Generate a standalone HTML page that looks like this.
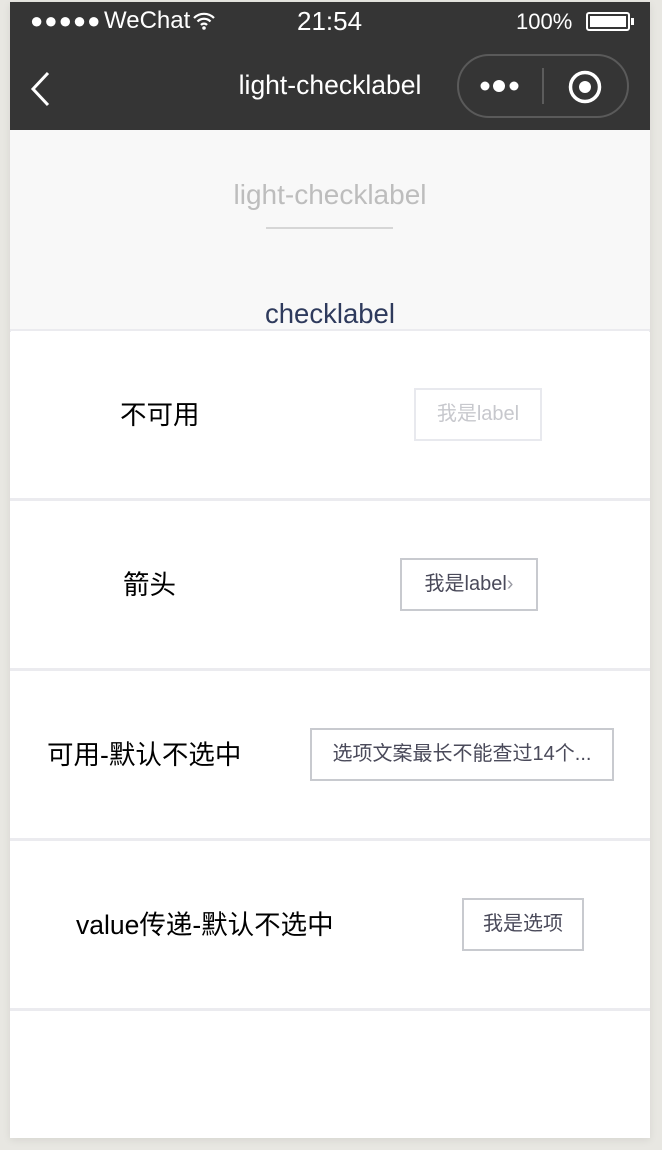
<!DOCTYPE html>
<html><head><meta charset="utf-8"><style>
*{margin:0;padding:0;box-sizing:border-box}
body{width:662px;height:1150px;background:#e8e7e2;font-family:"Liberation Sans","Noto Sans CJK SC",sans-serif;position:relative;overflow:hidden}
#f{position:absolute;left:10px;top:2px;width:640px;height:1136px;background:#fff;overflow:hidden;box-shadow:0 2px 8px rgba(0,0,0,.08)}
.hdr{position:absolute;left:0;top:0;width:640px;height:128px;background:#353535;color:#fff}
.abs{position:absolute}
.gray{position:absolute;left:0;top:128px;width:640px;height:201px;background:#f8f8f8}
.card{position:absolute;left:1px;width:638px;height:167px;background:#fff}
.sep{position:absolute;left:0;width:640px;height:3px;background:#ebebef}
.lbl{position:absolute;font-size:26.5px;color:#000;line-height:30px;white-space:nowrap}
.btn{position:absolute;border:2px solid #c8cacf;font-size:20px;color:#4a4a5a;text-align:center;line-height:49px;height:53px;white-space:nowrap}
</style></head><body>
<div id="f">
<div class="hdr">
 <div class="abs" style="left:20px;top:6px;font-size:22px;letter-spacing:1px">●●●●●</div>
 <div class="abs" style="left:94px;top:5px;font-size:24px">WeChat</div>
 <svg class="abs" style="left:182px;top:10px" width="24" height="18" viewBox="0 0 24 18"><path d="M2 6a14 14 0 0 1 20 0M5.5 9.5a9 9 0 0 1 13 0M9 13a4 4 0 0 1 6 0" stroke="#fff" stroke-width="2.2" fill="none"/><circle cx="12" cy="16" r="1.8" fill="#fff"/></svg>
 <div class="abs" style="left:287px;top:4px;font-size:26px">21:54</div>
 <div class="abs" style="left:506px;top:7px;font-size:22px">100%</div>
 <div class="abs" style="left:576px;top:10px;width:44px;height:19px;border:2px solid #fff;border-radius:3px"><div style="margin:2px;height:11px;background:#fff"></div></div>
 <div class="abs" style="left:621px;top:16px;width:3px;height:7px;background:#fff"></div>
 <svg class="abs" style="left:18px;top:68px" width="24" height="38" viewBox="0 0 24 38"><path d="M20 3L5 19l15 16" stroke="#fff" stroke-width="3" fill="none"/></svg>
 <div class="abs" style="left:0;width:640px;top:68px;text-align:center;font-size:26.5px">light-checklabel</div>
 <div class="abs" style="left:447px;top:52px;width:172px;height:64px;border:2px solid #5a5a5a;border-radius:32px"></div>
 <div class="abs" style="left:532px;top:66px;width:2px;height:36px;background:#5c5c5c"></div>
 <svg class="abs" style="left:468px;top:76px" width="46" height="16"><circle cx="7" cy="8" r="4.5" fill="#fff"/><circle cx="21" cy="8" r="6" fill="#fff"/><circle cx="36" cy="8" r="4.5" fill="#fff"/></svg>
 <svg class="abs" style="left:558px;top:68px" width="34" height="34"><circle cx="17" cy="17" r="14.5" stroke="#fff" stroke-width="3.5" fill="none"/><circle cx="17" cy="17" r="6" fill="#fff"/></svg>
</div>
<div class="gray">
 <div class="abs" style="left:0;width:640px;top:49px;text-align:center;font-size:28px;color:#bdbdbd">light-checklabel</div>
 <div class="abs" style="left:256px;top:97px;width:127px;height:2px;background:#d6d6d6"></div>
 <div class="abs" style="left:0;width:640px;top:168px;text-align:center;font-size:27.5px;color:#2e3a5c">checklabel</div>
</div>
<div class="sep" style="top:327px"></div>
<div class="card" style="top:329px">
 <div class="lbl" style="left:109px;top:69px">不可用</div>
 <div class="btn" style="left:403px;top:57px;width:128px;border-color:#e8e9ee;color:#c7c8cd">我是label</div>
</div>
<div class="sep" style="top:496px"></div>
<div class="card" style="top:499px">
 <div class="lbl" style="left:112px;top:69px">箭头</div>
 <div class="btn" style="left:389px;top:57px;width:138px">我是label<span style="color:#9a9ba4">›</span></div>
</div>
<div class="sep" style="top:666px"></div>
<div class="card" style="top:669px">
 <div class="lbl" style="left:36px;top:69px">可用-默认不选中</div>
 <div class="btn" style="left:299px;top:57px;width:304px">选项文案最长不能查过14个...</div>
</div>
<div class="sep" style="top:836px"></div>
<div class="card" style="top:839px">
 <div class="lbl" style="left:65px;top:69px">value传递-默认不选中</div>
 <div class="btn" style="left:451px;top:57px;width:122px">我是选项</div>
</div>
<div class="sep" style="top:1006px"></div>
</div>
</body></html>
